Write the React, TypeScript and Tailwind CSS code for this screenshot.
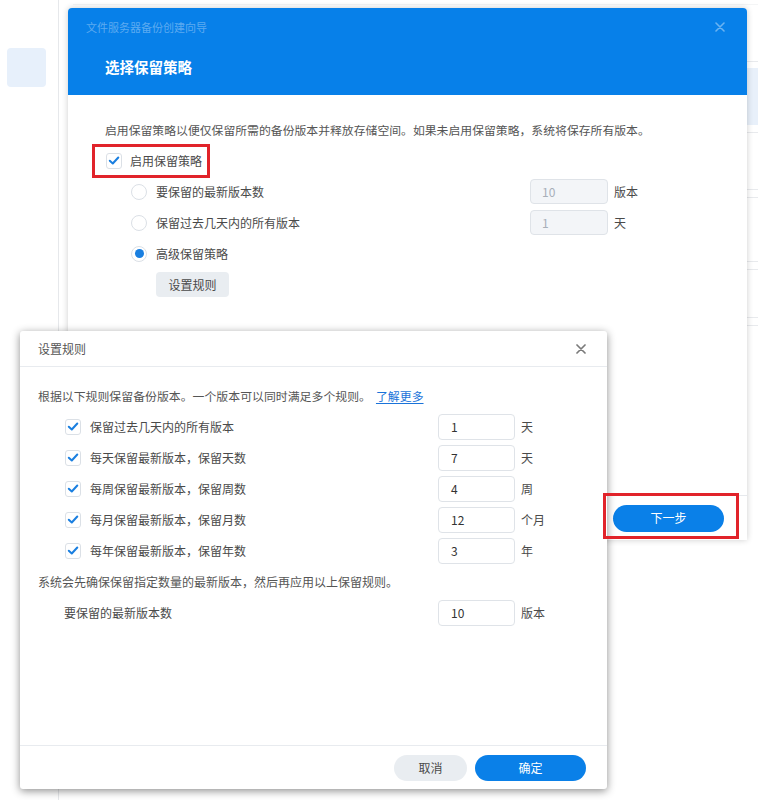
import React from "react";

function Check() {
  return (
    <span className="flex h-4 w-4 shrink-0 items-center justify-center rounded-[3px] border border-[#dbe0e6] bg-white">
      <svg viewBox="0 0 16 16" className="h-[15px] w-[15px]">
        <path d="M3.2 8.3 L6.6 11.4 L12.9 4.6" fill="none" stroke="#1a7fe0" strokeWidth="2.3" strokeLinecap="round" strokeLinejoin="round" />
      </svg>
    </span>
  );
}

function Radio({ on }: { on?: boolean }) {
  return (
    <span className="flex h-4 w-4 shrink-0 items-center justify-center rounded-full border border-[#dbe0e6] bg-white">
      {on ? <span className="h-[9px] w-[9px] rounded-full bg-[#1a7fe0]" /> : null}
    </span>
  );
}

function Field({ value, disabled }: { value: string; disabled?: boolean }) {
  return disabled ? (
    <div className="flex h-[25px] w-[78px] shrink-0 items-center rounded-[4px] border border-[#dfe3e8] bg-[#f3f5f8] pl-[11px] text-[12px] leading-[16px] text-[#a8afb8]">
      {value}
    </div>
  ) : (
    <div className="flex h-[26px] w-[77px] shrink-0 items-center rounded-[4px] border border-[#dfe3e8] bg-white pl-[12px] text-[12px] leading-[16px] text-[#333]">
      {value}
    </div>
  );
}

function RuleRow({ label, value, unit }: { label: string; value: string; unit: string }) {
  return (
    <div className="flex h-[31px] items-center pl-[27px]">
      <div className="flex w-[373px] items-center gap-[9px]">
        <Check />
        <span className="text-[12px] leading-[16px] text-[#4a4a4a]">{label}</span>
      </div>
      <Field value={value} />
      <span className="ml-[6px] text-[12px] leading-[16px] text-[#4a4a4a]">{unit}</span>
    </div>
  );
}

export default function App() {
  return (
    <div className="relative h-[800px] w-[758px] overflow-hidden bg-white font-['Noto_Sans_CJK_SC','Noto_Sans',sans-serif]">
      {/* background app */}
      <div className="flex h-full">
        <div className="w-[59px] shrink-0 border-r border-[#e6e8eb] pl-[7px] pt-[48px]">
          <div className="h-[39px] w-[39px] rounded-[4px] bg-[#e7f0fb]" />
        </div>
        <div className="flex flex-1 flex-col pl-[14px]">
          <div className="h-[5px] border-b border-[#f4f5f6]" />
          <div className="h-[57px] border-b border-[#e8eaed]" />
          <div className="h-[6px]" />
          <div className="h-[57px] bg-[#e8f0fa]" />
          <div className="h-[8px] border-b border-[#e8eaed]" />
          <div className="h-[57px] border-b border-[#e8eaed]" />
          <div className="h-[8px] border-b border-[#e8eaed]" />
          <div className="h-[64px] border-b border-[#e8eaed]" />
          <div className="h-[8px] border-b border-[#e8eaed]" />
          <div className="h-[48px] border-b border-[#e8eaed]" />
          <div className="h-[8px] border-b border-[#e8eaed]" />
        </div>
      </div>

      {/* wizard window */}
      <div className="absolute left-[68px] top-[8px] flex h-[532px] w-[679px] flex-col overflow-hidden rounded-t-[4px] bg-white shadow-[0_0_6px_rgba(0,0,0,0.2)]">
        <div className="h-[87px] shrink-0 bg-[#0780e9]">
          <div className="flex items-center justify-between pl-[18px] pr-[22px] pt-[11px]">
            <span className="text-[11px] leading-[16px] text-white/35">文件服务器备份创建向导</span>
            <svg viewBox="0 0 10 10" className="h-[10px] w-[10px]">
              <path d="M1 1 L9 9 M9 1 L1 9" stroke="rgba(255,255,255,0.4)" strokeWidth="1.6" strokeLinecap="round" />
            </svg>
          </div>
          <div className="pl-[37px] pt-[22px] text-[14.5px] font-bold leading-[20px] text-white">选择保留策略</div>
        </div>
        <div className="flex-1 px-[37px] pt-[27px]">
          <div className="text-[11.85px] leading-[16px] text-[#555]">
            启用保留策略以便仅保留所需的备份版本并释放存储空间。如果未启用保留策略，系统将保存所有版本。
          </div>
          <div className="ml-[1px] mt-[7px] flex h-[31px] items-center gap-[8px]">
            <Check />
            <span className="text-[12px] leading-[16px] text-[#4a4a4a]">启用保留策略</span>
          </div>
          <div className="pl-[26px]">
            <div className="flex h-[31px] items-center">
              <div className="flex w-[399px] items-center gap-[9px]">
                <Radio />
                <span className="text-[12px] leading-[16px] text-[#4a4a4a]">要保留的最新版本数</span>
              </div>
              <Field value="10" disabled />
              <span className="ml-[6px] text-[12px] leading-[16px] text-[#4a4a4a]">版本</span>
            </div>
            <div className="flex h-[31px] items-center">
              <div className="flex w-[399px] items-center gap-[9px]">
                <Radio />
                <span className="text-[12px] leading-[16px] text-[#4a4a4a]">保留过去几天内的所有版本</span>
              </div>
              <Field value="1" disabled />
              <span className="ml-[6px] text-[12px] leading-[16px] text-[#4a4a4a]">天</span>
            </div>
            <div className="flex h-[31px] items-center gap-[9px]">
              <Radio on />
              <span className="text-[12px] leading-[16px] text-[#4a4a4a]">高级保留策略</span>
            </div>
            <button className="ml-[25px] mt-[3px] flex h-[25px] w-[73px] items-center justify-center rounded-[4px] bg-[#e9edf1] text-[12px] leading-[16px] text-[#4a4a4a]">
              设置规则
            </button>
          </div>
        </div>
        <div className="flex h-[45px] shrink-0 items-center justify-end border-t border-[#e6e9ed] pr-[23px]">
          <button className="flex h-[27px] w-[111px] items-center justify-center rounded-full bg-[#0a80e8] text-[12px] leading-[16px] text-white">
            下一步
          </button>
        </div>
      </div>

      {/* rules dialog */}
      <div className="absolute left-[20px] top-[331px] flex h-[458px] w-[587px] flex-col rounded-[3px] bg-white shadow-[0_2px_8px_rgba(0,0,0,0.45)]">
        <div className="flex h-[36px] shrink-0 items-center justify-between border-b border-[#e8ebef] pl-[18px] pr-[21px]">
          <span className="text-[12px] leading-[16px] text-[#555]">设置规则</span>
          <svg viewBox="0 0 10 10" className="h-[10px] w-[10px]">
            <path d="M1 1 L9 9 M9 1 L1 9" stroke="#7a7a7a" strokeWidth="1.7" strokeLinecap="round" />
          </svg>
        </div>
        <div className="flex-1 px-[18px] pt-[21px]">
          <div className="text-[11.9px] leading-[16px] text-[#555]">
            根据以下规则保留备份版本。一个版本可以同时满足多个规则。
            <span className="ml-[5px] text-[#1a73d9] underline underline-offset-2">了解更多</span>
          </div>
          <div className="mt-[7px]">
            <RuleRow label="保留过去几天内的所有版本" value="1" unit="天" />
            <RuleRow label="每天保留最新版本，保留天数" value="7" unit="天" />
            <RuleRow label="每周保留最新版本，保留周数" value="4" unit="周" />
            <RuleRow label="每月保留最新版本，保留月数" value="12" unit="个月" />
            <RuleRow label="每年保留最新版本，保留年数" value="3" unit="年" />
          </div>
          <div className="mt-[8px] text-[12px] leading-[16px] text-[#555]">
            系统会先确保保留指定数量的最新版本，然后再应用以上保留规则。
          </div>
          <div className="mt-[7px] flex h-[31px] items-center pl-[26px]">
            <span className="w-[374px] text-[12px] leading-[16px] text-[#4a4a4a]">要保留的最新版本数</span>
            <Field value="10" />
            <span className="ml-[6px] text-[12px] leading-[16px] text-[#4a4a4a]">版本</span>
          </div>
        </div>
        <div className="flex h-[44px] shrink-0 items-center justify-end gap-[8px] border-t border-[#e8ebef] pr-[21px]">
          <button className="flex h-[26px] w-[73px] items-center justify-center rounded-full bg-[#e9edf1] text-[12px] leading-[16px] text-[#4a4a4a]">
            取消
          </button>
          <button className="flex h-[26px] w-[111px] items-center justify-center rounded-full bg-[#0a80e8] text-[12px] leading-[16px] text-white">
            确定
          </button>
        </div>
      </div>

      {/* annotation boxes */}
      <div className="absolute left-[92px] top-[144px] h-[34px] w-[118px] border-[3px] border-[#e1232a]" />
      <div className="absolute left-[603px] top-[493px] h-[46px] w-[136px] border-[3px] border-[#e1232a]" />
    </div>
  );
}
